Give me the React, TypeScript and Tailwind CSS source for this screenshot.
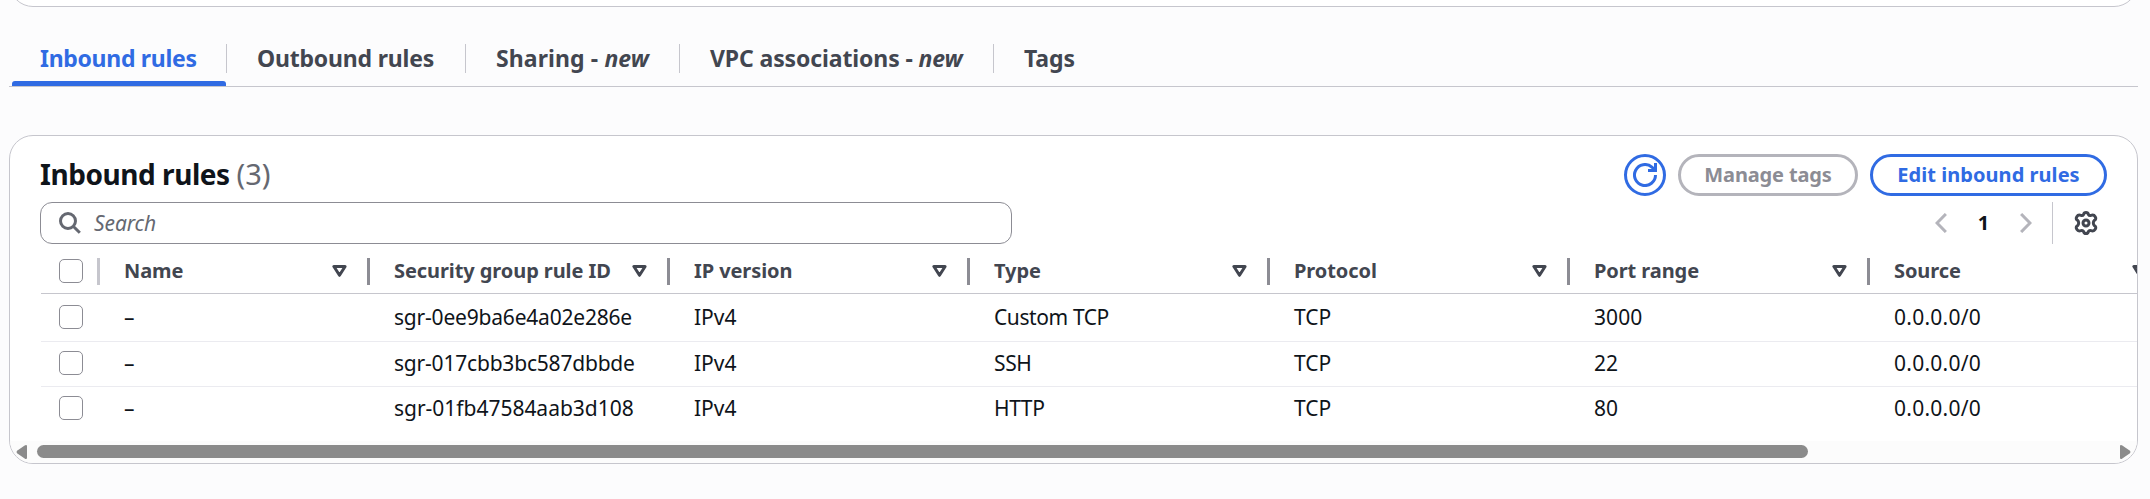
import type { ReactNode } from "react";

const columns = ["Name", "Security group rule ID", "IP version", "Type", "Protocol", "Port range", "Source"];

const rules = [
  { name: "–", id: "sgr-0ee9ba6e4a02e286e", ip: "IPv4", type: "Custom TCP", protocol: "TCP", port: "3000", source: "0.0.0.0/0", idSpacing: "tracking-[-0.2px]" },
  { name: "–", id: "sgr-017cbb3bc587dbbde", ip: "IPv4", type: "SSH", protocol: "TCP", port: "22", source: "0.0.0.0/0", idSpacing: "tracking-[-0.2px]" },
  { name: "–", id: "sgr-01fb47584aab3d108", ip: "IPv4", type: "HTTP", protocol: "TCP", port: "80", source: "0.0.0.0/0", idSpacing: "tracking-[-0.02px]" },
];

const rowHeights = [
  "h-12 border-b pb-px",
  "h-[45px] border-b pb-[2px]",
  "h-[45px] pb-[3px]",
];

function Checkbox() {
  return <span className="block size-6 shrink-0 rounded-[5px] border border-[#8c8c94] bg-white" />;
}

function SortIcon() {
  return (
    <svg viewBox="0 0 15 12" className="h-3 w-[15px] shrink-0" fill="none" stroke="#424650" strokeWidth="3" strokeLinejoin="round">
      <path d="M1.9 1.5h11.2L7.5 10.3z" />
    </svg>
  );
}

function RefreshIcon() {
  return (
    <svg viewBox="0 0 24 24" className="size-6" fill="none" stroke="#306be3" strokeWidth="3">
      <path d="M22.5 12A10.5 10.5 0 1 1 18.9 4.1L22 7.5" />
      <path d="M22.5 0v7.5H15" />
    </svg>
  );
}

function SearchIcon() {
  return (
    <svg viewBox="0 0 22 22" className="size-[22px] shrink-0" fill="none" stroke="#656871" strokeWidth="3">
      <circle cx="9" cy="9" r="7.5" />
      <path d="M14.2 14.2l6.6 6.6" />
    </svg>
  );
}

function Chevron({ flip = false }: { flip?: boolean }) {
  return (
    <svg viewBox="0 0 12 20" className={flip ? "h-5 w-3 rotate-180" : "h-5 w-3"} fill="none" stroke="#b4b4bb" strokeWidth="3">
      <path d="M10.9 1L2 10l8.9 9" />
    </svg>
  );
}

function GearIcon() {
  return (
    <svg viewBox="0 0 24 24" className="block size-6" fill="none" stroke="#424650" strokeWidth="3" strokeLinejoin="round">
      <path d="M9.6 3.4Q10 1.500 12 1.500T14.400 3.400Q15.300 5 17 4.400Q19.800 3.300 21.200 5.700T20.600 9.200Q19.300 10.400 19.300 12T20.600 14.800Q22.600 15.900 21.200 18.300T17 19.600Q15.300 19 14.400 20.600Q14 22.500 12 22.500T9.600 20.600Q8.700 19 7 19.600Q4.200 20.700 2.800 18.300T3.400 14.800Q4.700 13.600 4.700 12T3.400 9.200Q1.400 8.100 2.800 5.700T7 4.400Q8.700 5 9.600 3.400z" />
      <circle cx="12" cy="12" r="3" />
    </svg>
  );
}

function TabSeparator() {
  return <span className="mt-[7px] h-[29px] w-px shrink-0 bg-[#c6c6cd]" />;
}

function Tab({ className, children }: { className: string; children: ReactNode }) {
  return <div className={`h-full shrink-0 pl-[30px] whitespace-nowrap ${className}`}>{children}</div>;
}

function Cell({ first = false, children }: { first?: boolean; children: ReactNode }) {
  return <div className={first ? "w-[270px] shrink-0" : "w-[300px] shrink-0"}>{children}</div>;
}

export default function App() {
  return (
    <div className="flex h-[499px] w-[2150px] flex-col overflow-hidden bg-[#fcfcfd] pl-[9px] font-['Noto_Sans','Open_Sans',sans-serif] text-[21px] leading-[30px] text-[#0f141a]">
      <div className="flex h-[7px] w-[2129px] shrink-0 flex-col justify-end overflow-hidden">
        <div className="h-12 shrink-0 rounded-[24px] border border-[#c6c6cd] bg-white" />
      </div>

      <nav className="mt-[30px] flex h-[50px] w-[2129px] shrink-0 border-b border-[#c6c6cd] text-[23px] leading-[43px] font-bold text-[#424650]">
        <div className="flex w-[217px] shrink-0 flex-col justify-between pl-[3px]">
          <span className="pl-7 tracking-[-0.3px] whitespace-nowrap text-[#306be3]">Inbound rules</span>
          <span className="h-[5px] w-[214px] rounded-t-[3px] bg-[#306be3]" />
        </div>
        <TabSeparator />
        <Tab className="w-[238px] tracking-[-0.2px]">Outbound rules</Tab>
        <TabSeparator />
        <Tab className="w-[213px] tracking-[0.1px]">Sharing - <i>new</i></Tab>
        <TabSeparator />
        <Tab className="w-[313px] tracking-[-0.12px]">VPC associations - <i>new</i></Tab>
        <TabSeparator />
        <Tab className="w-[120px] tracking-[-0.1px]">Tags</Tab>
      </nav>

      <section className="mt-12 flex h-[329px] w-[2129px] shrink-0 flex-col overflow-hidden rounded-[24px] border border-[#c6c6cd] bg-white">
        <header className="mt-[18px] flex h-[42px] shrink-0 items-center pr-[30px] pl-[30px]">
          <h2 className="pb-[2px] text-[28px] font-bold tracking-[-0.45px] whitespace-nowrap">
            Inbound rules <span className="text-[29px] font-normal tracking-[0px] text-[#656871]">(3)</span>
          </h2>
          <div className="ml-auto flex gap-3 font-bold">
            <button className="flex size-[42px] items-center justify-center rounded-full border-[3px] border-[#306be3]">
              <RefreshIcon />
            </button>
            <button className="flex h-[42px] w-[180px] items-center justify-center rounded-full border-[3px] border-[#b4b4bb] text-[20px] tracking-[-0.15px] text-[#8c8c94]">
              Manage tags
            </button>
            <button className="flex h-[42px] w-[237px] items-center justify-center rounded-full border-[3px] border-[#306be3] text-[20px] tracking-[0.05px] whitespace-nowrap text-[#306be3]">
              Edit inbound rules
            </button>
          </div>
        </header>

        <div className="mt-[6px] flex h-[42px] shrink-0 items-center pr-[39px] pl-[30px]">
          <div className="flex h-[42px] w-[972px] items-center gap-[13px] rounded-[12px] border border-[#8c8c94] pl-[18px]">
            <SearchIcon />
            <span className="tracking-[-0.1px] text-[#656871] italic">Search</span>
          </div>
          <div className="ml-auto flex h-full items-center">
            <Chevron />
            <span className="w-[73px] text-center text-[20px] font-bold">1</span>
            <Chevron flip />
            <span className="ml-5 h-full w-px bg-[#c6c6cd]" />
            <span className="ml-[21px]"><GearIcon /></span>
          </div>
        </div>

        <div className="flex w-[2400px] shrink-0 flex-col pl-[31px]">
          <div className="flex h-[50px] shrink-0 items-center border-b border-[#c6c6cd] pt-[5px] pl-[18px] text-[20px] font-bold tracking-[-0.08px] text-[#424650]">
            <Checkbox />
            <span className="ml-[14px] h-[27px] w-[3px] shrink-0 bg-[#c6c6cd]" />
            {columns.map((column, i) => (
              <div key={column} className={i === 0 ? "flex w-[270px] shrink-0 items-center pl-6" : "flex w-[300px] shrink-0 items-center pl-6"}>
                <span className="whitespace-nowrap">{column}</span>
                <span className="mr-5 ml-auto"><SortIcon /></span>
                <span className="h-[27px] w-[3px] shrink-0 bg-[#8c8c94]" />
              </div>
            ))}
          </div>
          {rules.map((rule, i) => (
            <div key={rule.id} className={`flex shrink-0 items-center border-[#ebebf0] pl-[18px] ${rowHeights[i]}`}>
              <Checkbox />
              <span className="w-[41px] shrink-0" />
              <Cell first>{rule.name}</Cell>
              <Cell><span className={rule.idSpacing}>{rule.id}</span></Cell>
              <Cell>{rule.ip}</Cell>
              <Cell><span className="tracking-[-0.4px]">{rule.type}</span></Cell>
              <Cell>{rule.protocol}</Cell>
              <Cell><span className="tracking-[0.1px]">{rule.port}</span></Cell>
              <Cell><span className="tracking-[0.25px]">{rule.source}</span></Cell>
            </div>
          ))}
        </div>

        <div className="mt-auto flex h-[22px] shrink-0 items-center bg-[#fcfcfc] px-[6px] pb-px">
          <svg viewBox="0 0 11 14" className="h-[14px] w-[11px] shrink-0" fill="#8b8b8b">
            <path d="M11 1v12q0 1-1 1-.7 0-1.300-.5L1 8.200Q0 7 1 5.800L8.700.5Q9.300 0 10 0q1 0 1 1z" />
          </svg>
          <div className="ml-[10px] h-[13px] w-[1771px] rounded-full bg-[#8b8b8b]" />
          <svg viewBox="0 0 11 14" className="ml-auto h-[14px] w-[11px] shrink-0 rotate-180" fill="#8b8b8b">
            <path d="M11 1v12q0 1-1 1-.7 0-1.300-.5L1 8.200Q0 7 1 5.800L8.700.5Q9.300 0 10 0q1 0 1 1z" />
          </svg>
        </div>
      </section>
    </div>
  );
}
